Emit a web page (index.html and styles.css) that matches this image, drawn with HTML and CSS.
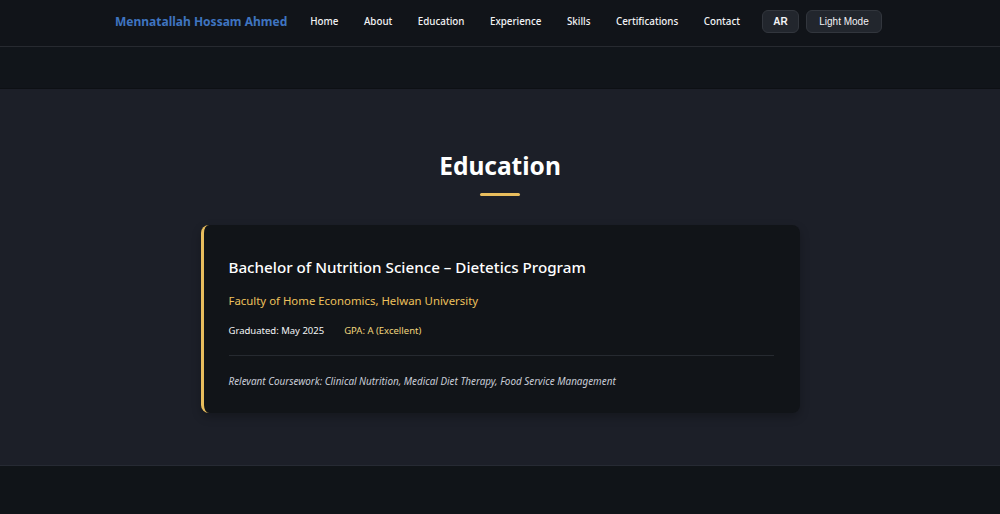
FILE: index.html
```html
<!DOCTYPE html>
<html lang="en">
<head>
<meta charset="utf-8">
<title>Mennatallah Hossam Ahmed</title>
<link rel="stylesheet" href="styles.css">
</head>
<body>
<header class="site-header">
  <div class="container header-inner">
    <a class="logo" href="#">Mennatallah Hossam Ahmed</a>
    <nav class="nav">
      <a href="#">Home</a>
      <a href="#">About</a>
      <a href="#">Education</a>
      <a href="#">Experience</a>
      <a href="#">Skills</a>
      <a href="#">Certifications</a>
      <a href="#">Contact</a>
    </nav>
    <div class="actions">
      <button class="btn btn-lang">AR</button>
      <button class="btn btn-theme">Light Mode</button>
    </div>
  </div>
</header>
<div class="band"></div>
<section class="section">
  <h2 class="section-title">Education</h2>
  <div class="title-line"></div>
  <article class="card">
    <h3 class="degree">Bachelor of Nutrition Science – Dietetics Program</h3>
    <p class="school">Faculty of Home Economics, Helwan University</p>
    <div class="meta">
      <span>Graduated: May 2025</span>
      <span class="gpa">GPA: A (Excellent)</span>
    </div>
    <p class="coursework">Relevant Coursework: Clinical Nutrition, Medical Diet Therapy, Food Service Management</p>
  </article>
</section>
<footer class="footer"></footer>
</body>
</html>
```

FILE: styles.css
```css
* { box-sizing: border-box; }
html, body { margin: 0; padding: 0; }
body {
  background: #101418;
  font-family: "Noto Sans", "Open Sans", sans-serif;
  color: #f2f3f5;
}
.container { width: 770px; margin: 0 auto; }
.site-header {
  height: 47px;
  background: #111419;
  border-bottom: 1px solid #272a30;
}
.header-inner {
  height: 46px;
  padding-bottom: 3px;
  display: flex;
  align-items: center;
}
.logo {
  color: #3f74c0;
  font-weight: 700;
  font-size: 12px;
  text-decoration: none;
  white-space: nowrap;
  flex-shrink: 0;
}
.nav {
  display: flex;
  gap: 25.5px;
  margin-left: 23px;
  white-space: nowrap;
}
.nav a {
  color: #f2f3f5;
  text-decoration: none;
  font-size: 9.8px;
  font-weight: 500;
}
.actions { display: flex; gap: 7px; margin-left: 22px; flex-shrink: 0; }
.btn {
  background: #22262d;
  border: 1px solid #32363d;
  color: #f2f3f5;
  border-radius: 6px;
  height: 23px;
  font-family: "Liberation Sans", Arial, sans-serif;
  font-size: 10px;
  white-space: nowrap;
  padding: 0;
}
.btn-lang { font-weight: 700; width: 37px; }
.btn-theme { width: 76px; }
.band {
  height: 42px;
  background: #11151a;
  border-bottom: 1px solid #0d1014;
}
.section {
  background: #1c1f28;
  padding: 60px 0 52px;
  border-bottom: 1px solid #262a33;
}
.section-title {
  margin: 0;
  text-align: center;
  font-size: 24.5px;
  font-weight: 700;
  line-height: 34px;
  color: #ffffff;
}
.title-line {
  width: 40px;
  height: 3px;
  border-radius: 2px;
  background: #e8bd5d;
  margin: 10px auto 0;
}
.card {
  width: 599px;
  margin: 29px auto 0;
  background: #111418;
  border-left: 3px solid #e8bd5d;
  border-radius: 8px;
  padding: 30px 26px 25px 25px;
  box-shadow: 0 4px 10px rgba(0,0,0,0.25);
}
.degree {
  margin: 0;
  font-size: 15.2px;
  font-weight: 500;
  line-height: 24px;
  color: #ffffff;
}
.school {
  margin: 13px 0 0;
  font-size: 11.4px;
  line-height: 18px;
  color: #edc15c;
}
.meta {
  margin-top: 14px;
  display: flex;
  gap: 20px;
  font-size: 9.5px;
  line-height: 14px;
  color: #f3f4f6;
}
.gpa { color: #f0d47c; }
.coursework {
  margin: 17px 0 0;
  padding-top: 18px;
  border-top: 1px solid #262a30;
  font-size: 9.9px;
  font-style: italic;
  color: #c8ccd6;
  line-height: 14px;
}
.footer { height: 60px; background: #101418; }
```
